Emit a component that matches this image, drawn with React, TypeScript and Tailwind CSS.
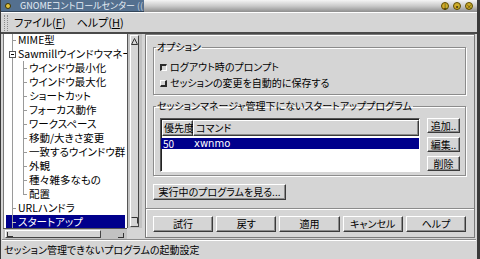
import React from "react";

type TreeNode = {
  label: string;
  level: 0 | 1;
  expander?: boolean;
  last?: boolean;
  selected?: boolean;
};

const nodes: TreeNode[] = [
  { label: "MIME型", level: 0 },
  { label: "Sawmillウインドウマネージャ", level: 0, expander: true },
  { label: "ウインドウ最小化", level: 1 },
  { label: "ウインドウ最大化", level: 1 },
  { label: "ショートカット", level: 1 },
  { label: "フォーカス動作", level: 1 },
  { label: "ワークスペース", level: 1 },
  { label: "移動/大きさ変更", level: 1 },
  { label: "一致するウインドウ群", level: 1 },
  { label: "外観", level: 1 },
  { label: "種々雑多なもの", level: 1 },
  { label: "配置", level: 1, last: true },
  { label: "URLハンドラ", level: 0 },
  { label: "スタートアップ", level: 0, selected: true },
];

function Btn({ children, className = "" }: { children: React.ReactNode; className?: string }) {
  return (
    <div
      className={`flex items-center justify-center whitespace-nowrap bg-[#d5d5d5] border border-t-white border-l-white border-r-[#3a3a3a] border-b-[#3a3a3a] shadow-[inset_-1px_-1px_0_#8c8c8c] leading-none ${className}`}
    >
      {children}
    </div>
  );
}

function Group({ title, children, className = "" }: { title: string; children: React.ReactNode; className?: string }) {
  return (
    <fieldset className={`border border-[#8c8c8c] shadow-[inset_1px_1px_0_#fff,1px_1px_0_#fff] ${className}`}>
      <legend className="ml-[2px] px-[1px] leading-[14px] whitespace-nowrap">{title}</legend>
      {children}
    </fieldset>
  );
}

function Check({ checked, label }: { checked?: boolean; label: string }) {
  return (
    <div className="flex items-center h-[16px] gap-[3px]">
      <span
        className={
          checked
            ? "w-[7px] h-[7px] border-t-2 border-l-2 border-[#2a2a2a] border-r border-b border-r-white border-b-white"
            : "w-[7px] h-[7px] border-b-2 border-r-2 border-[#2a2a2a] border-t border-l border-t-white border-l-white"
        }
      />
      <span className="leading-none whitespace-nowrap">{label}</span>
    </div>
  );
}

function Arrow({ up }: { up?: boolean }) {
  return (
    <svg width="7" height="7" viewBox="0 0 7 7">
      {up ? (
        <path d="M0.5 6.5 L3.5 0.5 L6.5 6.5 Z" fill="none" stroke="#333" strokeWidth="1" />
      ) : (
        <path d="M0.5 0.5 L6.5 0.5 L6.5 6.5" fill="none" stroke="#333" strokeWidth="1" />
      )}
    </svg>
  );
}

function TreeRow({ node }: { node: TreeNode }) {
  const textLeft = node.level === 0 ? "pl-[14px]" : "pl-[25px]";
  return (
    <div
      className={`relative h-[14px] flex items-center whitespace-nowrap ${textLeft} ${
        node.selected ? "bg-[#00008c] text-white mx-[2px] !pl-[12px]" : ""
      }`}
    >
      {/* tree lines */}
      <span className={`absolute top-0 bottom-0 w-px bg-[#9a9a9a] ${node.selected ? "left-[6px]" : "left-[8px]"}`} />
      {node.level === 0 && !node.expander && (
        <span className={`absolute top-[7px] h-px w-[4px] bg-[#9a9a9a] ${node.selected ? "left-[6px] bg-[#c0c0c0]" : "left-[8px]"}`} />
      )}
      {node.expander && (
        <span className="absolute left-[5px] top-[4px] w-[7px] h-[7px] border border-[#555] bg-white flex items-center justify-center">
          <span className="w-[3px] h-px bg-black" />
        </span>
      )}
      {node.level === 1 && (
        <>
          <span className={`absolute left-[19px] top-0 w-px bg-[#9a9a9a] ${node.last ? "h-[7px]" : "bottom-0"}`} />
          <span className="absolute left-[19px] top-[7px] h-px w-[4px] bg-[#9a9a9a]" />
        </>
      )}
      <span className="relative leading-none">{node.label}</span>
    </div>
  );
}

export default function App() {
  return (
    <div className="w-[480px] h-[259px] overflow-hidden bg-[#d5d5d5] flex flex-col border-l border-r-[3px] border-[#3a3a3a] font-['Noto_Sans_CJK_JP',sans-serif] text-[10px] text-black [font-feature-settings:'palt']">
      {/* title bar */}
      <div className="h-[12px] flex shrink-0">
        <div className="w-[143px] bg-[#54708f] flex items-center pl-[4px] border-b border-[#34465a] overflow-hidden">
          <span className="shrink-0 w-[6px] h-[6px] rounded-full bg-[#e2c440] border border-[#3a3000]" />
          <span className="ml-[9px] text-[9px] leading-none whitespace-nowrap text-[#e6edf5]">GNOMEコントロールセンター</span>
          <span className="ml-auto mr-[1px] text-[9px] leading-none text-[#c8d4e0]">((</span>
        </div>
        <div className="flex-1 flex items-center justify-end gap-[4px] pr-[4px] bg-gradient-to-b from-[#f4f4f4] via-[#c9c9c9] to-[#8e8e8e]">
          {["↓", "•", "×"].map((s, i) => (
            <span
              key={i}
              className="w-[8px] h-[8px] rounded-full bg-[#cfae2c] border border-[#5c4a00] flex items-center justify-center text-[7px] leading-none text-[#3a2e00]"
            >
              {s}
            </span>
          ))}
        </div>
      </div>

      {/* menubar */}
      <div className="h-[22px] shrink-0 flex items-center text-[11px] border-t border-t-white border-b-2 border-b-[#4a4a4a]">
        <div className="ml-[3px] h-[16px] w-[4px] border-l border-r border-dotted border-[#8a8a8a]" />
        <span className="ml-[6px] leading-none">
          ファイル(<span className="underline">F</span>)
        </span>
        <span className="ml-[11px] leading-none">
          ヘルプ(<span className="underline">H</span>)
        </span>
      </div>

      {/* main */}
      <div className="h-[205px] shrink-0 flex px-[2px]">
        {/* tree side */}
        <div className="w-[139px] flex flex-col">
          <div className="h-[194px] flex">
            <div className="w-[124px] bg-white overflow-hidden border-l border-[#7a7a7a] text-[10.5px]">
              <div className="-mt-[1px]">
                {nodes.map((n) => (
                  <TreeRow key={n.label} node={n} />
                ))}
              </div>
            </div>
            <div className="w-[15px] bg-[#c2c2c2] border-l border-[#555] py-[1px] pl-[2px] pr-[3px]">
              <div className="h-full bg-[#d5d5d5] border border-t-white border-l-white border-r-[#444] border-b-[#444] flex flex-col items-center justify-between py-[2px]">
                <Arrow up />
                <Arrow />
              </div>
            </div>
          </div>
          <div className="h-[11px] flex">
            <div className="w-[124px] bg-[#c2c2c2] border-t border-[#555] px-[2px] py-[1px] flex">
              <div className="w-[96px] bg-[#d5d5d5] border border-t-white border-l-white border-r-[#444] border-b-[#444] flex items-end pl-[1px]">
                <span className="w-[6px] h-[5px] border-l border-b border-[#333]" />
              </div>
              <div className="flex-1 flex items-end justify-end pr-[1px]">
                <span className="w-[6px] h-[5px] border-r border-b border-[#333]" />
              </div>
            </div>
            <div className="flex-1 bg-[#d5d5d5]" />
          </div>
        </div>

        {/* right panel */}
        <div className="flex-1 ml-[3px] mb-[1px] border border-[#7a7a7a] shadow-[inset_1px_1px_0_#fff] flex flex-col">
          <div className="pl-[7px] pr-[8px] flex flex-col">
            <Group title="オプション" className="mt-[5px]">
              <div className="pl-[6px] pt-[5px] pb-[3px]">
                <Check checked label="ログアウト時のプロンプト" />
                <Check label="セッションの変更を自動的に保存する" />
              </div>
            </Group>

            <Group title="セッションマネージャ管理下にないスタートアッププログラム" className="mt-[4px]">
              <div className="flex gap-[7px] pl-[6px] pr-[5px] pt-[5px] pb-[3px]">
                <div className="w-[260px] h-[54px] bg-white border border-t-[#555] border-l-[#555] border-r-white border-b-white shadow-[inset_1px_1px_0_#222]">
                  <div className="flex h-[16px] ml-[1px] mt-[1px]">
                    <Btn className="w-[31px] !justify-start pl-[1px]">優先度</Btn>
                    <Btn className="flex-1 !justify-start pl-[2px]">コマンド</Btn>
                  </div>
                  <div className="mt-[2px] h-[11px] bg-[#00008c] text-white flex items-center">
                    <span className="w-[33px] pl-[2px] leading-none">50</span>
                    <span className="leading-none font-['DejaVu_Sans',sans-serif]">xwnmo</span>
                  </div>
                </div>
                <div className="flex flex-col gap-[4px]">
                  <Btn className="w-[33px] h-[15px]">追加..</Btn>
                  <Btn className="w-[33px] h-[15px]">編集..</Btn>
                  <Btn className="w-[33px] h-[15px]">削除</Btn>
                </div>
              </div>
            </Group>

            <Btn className="mt-[8px] w-[133px] h-[16px]">実行中のプログラムを見る...</Btn>
          </div>

          <div className="mt-[8px] border-t border-[#8c8c8c] border-b border-b-white" />

          <div className="mt-[6px] pl-[7px] pr-[8px] flex gap-[3px]">
            {["試行", "戻す", "適用", "キャンセル", "ヘルプ"].map((t) => (
              <Btn key={t} className="flex-1 h-[16px]">
                {t}
              </Btn>
            ))}
          </div>
        </div>
      </div>

      {/* status bar */}
      <div className="flex-1 flex items-center border-t border-[#8c8c8c] shadow-[inset_0_1px_0_#fff] mx-[1px] pl-[2px]">
        <span className="leading-none whitespace-nowrap">セッション管理できないプログラムの起動設定</span>
      </div>
    </div>
  );
}
